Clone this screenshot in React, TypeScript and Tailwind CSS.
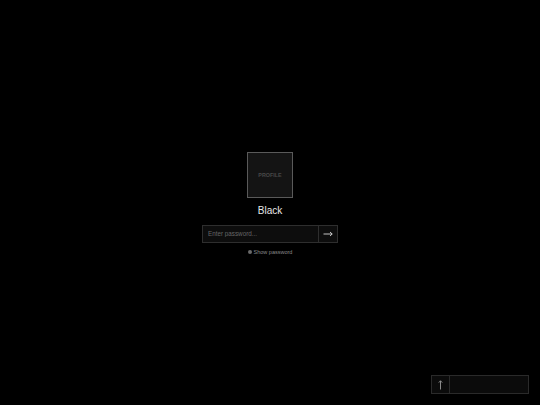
export default function App() {
  return (
    <div
      className="relative h-[405px] w-full bg-black text-white overflow-hidden"
      style={{ fontFamily: '"Liberation Sans", Arial, sans-serif' }}
    >
      <div className="flex h-full flex-col items-center justify-center pt-[3px]">
        <div className="flex h-[46px] w-[46px] items-center justify-center border border-[#5a5a5a] bg-[#141414]">
          <span className="text-[5.4px] font-bold text-[#484848]">PROFILE</span>
        </div>
        <div className="mt-[7px] text-[10px] leading-[12px] text-[#e8e8e8]">Black</div>
        <form className="mt-[8px] flex h-[18px] w-[136px] border border-[#2e2e2e] bg-[#0d0d0d]">
          <input
            type="password"
            placeholder="Enter password..."
            className="h-full w-[115px] bg-transparent px-[5px] text-[6.3px] text-white outline-none placeholder:text-[#666666]"
          />
          <button
            type="button"
            className="flex flex-1 items-center justify-center border-l border-[#2e2e2e]"
          >
            <svg width="10" height="6" viewBox="0 0 10 6" fill="none" stroke="#d8d8d8" strokeWidth="0.9">
              <path d="M0.5 3H9.2M7 1L9.2 3L7 5" />
            </svg>
          </button>
        </form>
        <label className="mt-[5px] flex items-center gap-[2px] text-[5.5px] text-[#8a8a8a]">
          <span className="h-[4px] w-[4px] rounded-full bg-[#6a6a6a]" />
          Show password
        </label>
      </div>

      <div className="absolute bottom-[11px] right-[11px] flex h-[19px] w-[98px] border border-[#2a2a2a] bg-[#0b0b0b]">
        <button
          type="button"
          className="flex w-[18px] items-center justify-center border-r border-[#2a2a2a]"
        >
          <svg width="5" height="10" viewBox="0 0 5 10" fill="none" stroke="#9a9a9a" strokeWidth="0.9">
            <path d="M2.5 9.5V0.8M0.8 2.6L2.5 0.8L4.2 2.6" />
          </svg>
        </button>
        <div className="flex-1" />
      </div>
    </div>
  );
}
